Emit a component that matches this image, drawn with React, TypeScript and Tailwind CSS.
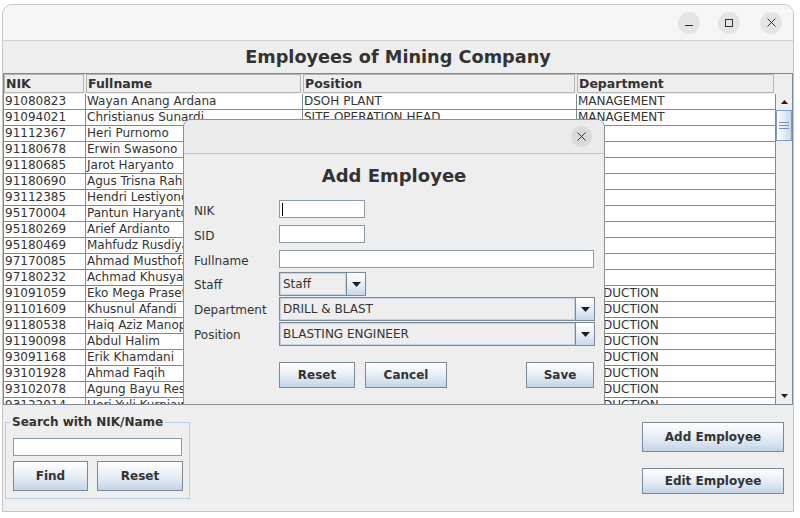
import React from 'react';

type Row = [string, string, string, string];

const rows: Row[] = [
  ['91080823', 'Wayan Anang Ardana', 'DSOH PLANT', 'MANAGEMENT'],
  ['91094021', 'Christianus Sunardi', 'SITE OPERATION HEAD', 'MANAGEMENT'],
  ['91112367', 'Heri Purnomo', 'HR SUPERINTENDENT', 'HR'],
  ['91180678', 'Erwin Swasono', 'GA SUPERVISOR', 'GA'],
  ['91180685', 'Jarot Haryanto', 'HR OFFICER', 'HR'],
  ['91180690', 'Agus Trisna Rahmat', 'IT SUPERVISOR', 'IT'],
  ['93112385', 'Hendri Lestiyono', 'GA OFFICER', 'GA'],
  ['95170004', 'Pantun Haryanto', 'HR ADMIN', 'HR'],
  ['95180269', 'Arief Ardianto', 'IT STAFF', 'IT'],
  ['95180469', 'Mahfudz Rusdiyanto', 'GA STAFF', 'GA'],
  ['97170085', 'Ahmad Musthofa', 'HR STAFF', 'HR'],
  ['97180232', 'Achmad Khusyairi', 'GA ADMIN', 'GA'],
  ['91091059', 'Eko Mega Prasetyo', 'PRODUCTION SUPERINTENDENT', 'PRODUCTION'],
  ['91101609', 'Khusnul Afandi', 'PRODUCTION SUPERVISOR', 'PRODUCTION'],
  ['91180538', 'Haiq Aziz Manopo', 'PRODUCTION SUPERVISOR', 'PRODUCTION'],
  ['91190098', 'Abdul Halim', 'PRODUCTION FOREMAN', 'PRODUCTION'],
  ['93091168', 'Erik Khamdani', 'PRODUCTION FOREMAN', 'PRODUCTION'],
  ['93101928', 'Ahmad Faqih', 'PRODUCTION FOREMAN', 'PRODUCTION'],
  ['93102078', 'Agung Bayu Respati', 'PRODUCTION FOREMAN', 'PRODUCTION'],
  ['93122014', 'Heri Yuli Kurniawan', 'PRODUCTION FOREMAN', 'PRODUCTION'],
];

function MetalButton({ label, className }: { label: string; className: string }) {
  return (
    <button
      className={`flex items-center justify-center border border-[#7a8a99] bg-[linear-gradient(180deg,#ffffff_0%,#f1f5fa_30%,#dfe8f2_62%,#c3d4e7_100%)] text-[12px] font-bold text-[#333333] ${className}`}
    >
      {label}
    </button>
  );
}

function DownArrow() {
  return (
    <svg width="9" height="5" viewBox="0 0 9 5">
      <path d="M0 0H9L4.5 5Z" fill="#1e1e1e" />
    </svg>
  );
}

function Combo({ value, className }: { value: string; className: string }) {
  return (
    <div className={`flex h-[24px] border border-[#7a8a99] ${className}`}>
      <div className="flex-1 border border-[#c5d3e2] bg-[#eeeeee] pl-[2px] text-[12px] leading-[20px] text-[#333333]">
        {value}
      </div>
      <div className="flex w-[19px] items-center justify-center border-l border-[#7a8a99] bg-[linear-gradient(180deg,#ffffff_0%,#e6eef6_55%,#c8d8e9_100%)]">
        <DownArrow />
      </div>
    </div>
  );
}

export default function App() {
  return (
    <div className="relative h-[518px] w-[800px] overflow-hidden bg-white font-['DejaVu_Sans',sans-serif] text-[#333333]">
      {/* main window */}
      <div className="ml-[2px] mt-[4px] flex h-[508px] w-[792px] flex-col overflow-hidden rounded-t-[10px] border border-[#c6c6c6] bg-[#eeeeee]">
        <div className="flex h-[36px] shrink-0 items-center justify-end border-b border-[#d0d0d0] bg-[#f6f6f6] pr-[11px]">
          <div className="flex h-[22px] w-[22px] items-center justify-center rounded-full bg-[#e4e4e4]">
            <div className="mt-[6px] h-px w-[8px] bg-[#333333]" />
          </div>
          <div className="ml-[18px] flex h-[22px] w-[22px] items-center justify-center rounded-full bg-[#e4e4e4]">
            <div className="h-[8px] w-[8px] border border-[#333333]" />
          </div>
          <div className="ml-[20px] flex h-[22px] w-[22px] items-center justify-center rounded-full bg-[#e4e4e4]">
            <svg width="9" height="9" viewBox="0 0 9 9">
              <path d="M0.5 0.5L8.5 8.5M8.5 0.5L0.5 8.5" stroke="#333333" strokeWidth="1" />
            </svg>
          </div>
        </div>

        <div className="flex h-[32px] shrink-0 items-center justify-center text-[17.7px] font-bold leading-[22px]">
          Employees of Mining Company
        </div>

        {/* table scroll pane */}
        <div className="h-[332px] shrink-0 border border-[#7a8a99] bg-[#eeeeee]">
          <div className="flex h-[20px] text-[12.5px] font-bold leading-[17px]">
            <div className="h-full w-[82px] pr-[2px]">
              <div className="h-[19px] border border-[#b5b5b5] pl-px">NIK</div>
            </div>
            <div className="h-full w-[217px] pr-[2px]">
              <div className="h-[19px] border border-[#b5b5b5] pl-px">Fullname</div>
            </div>
            <div className="h-full w-[274px] pr-[2px]">
              <div className="h-[19px] border border-[#b5b5b5] pl-px">Position</div>
            </div>
            <div className="h-full w-[199px] pr-[2px]">
              <div className="h-[19px] border border-[#b5b5b5] pl-px">Department</div>
            </div>
          </div>
          <div className="flex h-[310px]">
            <div className="h-full w-[772px] overflow-hidden bg-white">
              {rows.map((r) => (
                <div key={r[0]} className="flex h-4 border-b border-[#7a8a99] text-[12px] leading-[15px]">
                  <div className="w-[82px] overflow-hidden whitespace-nowrap border-r border-[#7a8a99] pl-px">{r[0]}</div>
                  <div className="w-[217px] overflow-hidden whitespace-nowrap border-r border-[#7a8a99] pl-px">{r[1]}</div>
                  <div className="w-[274px] overflow-hidden whitespace-nowrap border-r border-[#7a8a99] pl-px">{r[2]}</div>
                  <div className="w-[199px] overflow-hidden whitespace-nowrap border-r border-[#7a8a99] pl-px">{r[3]}</div>
                </div>
              ))}
            </div>
            {/* scrollbar */}
            <div className="flex h-full w-4 flex-col bg-[#eeeeee]">
              <div className="flex h-4 items-center justify-center">
                <svg width="7" height="4" viewBox="0 0 7 4">
                  <path d="M0 4H7L3.5 0Z" fill="#1e1e1e" />
                </svg>
              </div>
              <div className="flex h-[31px] flex-col items-center justify-center gap-[2px] border border-[#7c9bd2] bg-[linear-gradient(90deg,#ffffff_0%,#e3ecf7_50%,#c5d7ee_100%)]">
                <div className="h-px w-[10px] bg-[#6f8fc6]" />
                <div className="h-px w-[10px] bg-[#6f8fc6]" />
                <div className="h-px w-[10px] bg-[#6f8fc6]" />
              </div>
              <div className="flex-1" />
              <div className="flex h-4 items-center justify-center">
                <svg width="7" height="4" viewBox="0 0 7 4">
                  <path d="M0 0H7L3.5 4Z" fill="#1e1e1e" />
                </svg>
              </div>
            </div>
          </div>
        </div>

        {/* bottom panel */}
        <div className="flex flex-1 justify-between">
          <fieldset className="ml-[2px] mt-[10px] h-[84px] w-[185px] border border-[#b8cfe5] pb-[6px] pl-[7px]">
            <legend className="-ml-[3px] px-[2px] text-[12px] font-bold leading-[14px]">Search with NIK/Name</legend>
            <div className="mt-[9px] h-[18px] w-[169px] border border-[#8c99a7] bg-white" />
            <div className="mt-[5px] flex">
              <MetalButton label="Find" className="h-[30px] w-[75px]" />
              <MetalButton label="Reset" className="ml-[9px] h-[30px] w-[86px]" />
            </div>
          </fieldset>
          <div className="mr-[9px] mt-[17px] flex flex-col">
            <MetalButton label="Add Employee" className="h-[30px] w-[142px]" />
            <MetalButton label="Edit Employee" className="mt-[16px] h-[26px] w-[142px]" />
          </div>
        </div>
      </div>

      {/* Add Employee dialog */}
      <div className="absolute left-[183px] top-[119px] flex h-[286px] w-[422px] flex-col overflow-hidden rounded-t-[8px] border border-[#8f8f8f] bg-[#eeeeee]">
        <div className="flex h-[34px] shrink-0 items-center justify-end border-b border-[#c2c2c2] bg-[#ebebeb] pr-[12px]">
          <div className="flex h-[21px] w-[21px] items-center justify-center rounded-full bg-[#dadada]">
            <svg width="9" height="9" viewBox="0 0 9 9">
              <path d="M0.5 0.5L8.5 8.5M8.5 0.5L0.5 8.5" stroke="#333333" strokeWidth="1" />
            </svg>
          </div>
        </div>
        <div className="mt-[11px] text-center text-[18px] font-bold leading-[22px]">Add Employee</div>
        <div className="pl-[10px] text-[12px]">
          <div className="mt-[13px] flex h-[18px] items-center">
            <div className="w-[85px] pt-[3px]">NIK</div>
            <div className="flex h-[18px] w-[86px] items-center border border-[#8c99a7] bg-white pl-[2px]">
              <div className="h-[13px] w-px bg-black" />
            </div>
          </div>
          <div className="mt-[7px] flex h-[18px] items-center">
            <div className="w-[85px] pt-[3px]">SID</div>
            <div className="h-[18px] w-[86px] border border-[#8c99a7] bg-white" />
          </div>
          <div className="mt-[7px] flex h-[18px] items-center">
            <div className="w-[85px] pt-[3px]">Fullname</div>
            <div className="h-[18px] w-[315px] border border-[#8c99a7] bg-white" />
          </div>
          <div className="mt-[4px] flex h-[24px] items-center">
            <div className="w-[85px] pt-[2px]">Staff</div>
            <Combo value="Staff" className="w-[87px]" />
          </div>
          <div className="mt-[1px] flex h-[24px] items-center">
            <div className="w-[85px] pt-[2px]">Department</div>
            <Combo value="DRILL & BLAST" className="w-[316px]" />
          </div>
          <div className="mt-[1px] flex h-[24px] items-center">
            <div className="w-[85px] pt-[2px]">Position</div>
            <Combo value="BLASTING ENGINEER" className="w-[316px]" />
          </div>
          <div className="ml-[85px] mt-[16px] flex">
            <MetalButton label="Reset" className="h-[26px] w-[76px]" />
            <MetalButton label="Cancel" className="ml-[10px] h-[26px] w-[82px]" />
            <MetalButton label="Save" className="ml-[79px] h-[26px] w-[68px]" />
          </div>
        </div>
      </div>
    </div>
  );
}
